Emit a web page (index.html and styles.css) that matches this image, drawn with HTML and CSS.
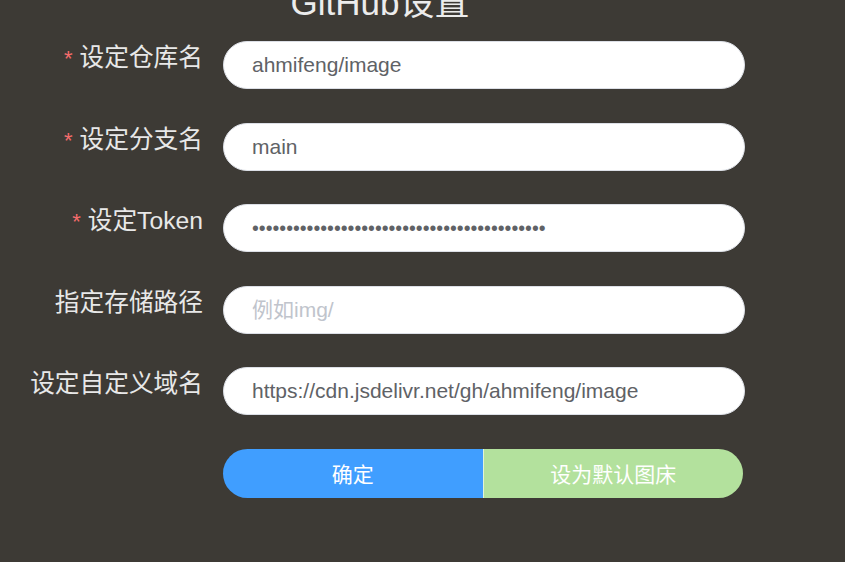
FILE: index.html
```html
<!DOCTYPE html>
<html lang="zh">
<head>
<meta charset="utf-8">
<link rel="stylesheet" href="styles.css">
</head>
<body>
<div class="panel">
  <h2 class="title">GitHub设置</h2>
  <form class="form">
    <div class="row">
      <label class="label"><span class="req">*</span>设定仓库名</label>
      <input class="input" type="text" value="ahmifeng/image">
    </div>
    <div class="row">
      <label class="label"><span class="req">*</span>设定分支名</label>
      <input class="input" type="text" value="main">
    </div>
    <div class="row">
      <label class="label"><span class="req">*</span>设定Token</label>
      <input class="input" type="password" value="ghp_abcdefghijklmnopqrstuvwxyz0123456789abc">
    </div>
    <div class="row">
      <label class="label">指定存储路径</label>
      <input class="input" type="text" placeholder="例如img/">
    </div>
    <div class="row">
      <label class="label">设定自定义域名</label>
      <input class="input" type="text" value="https://cdn.jsdelivr.net/gh/ahmifeng/image">
    </div>
    <div class="row">
      <div class="label"></div>
      <div class="btns">
        <button type="button" class="btn btn-primary">确定</button>
        <button type="button" class="btn btn-success">设为默认图床</button>
      </div>
    </div>
  </form>
</div>
</body>
</html>
```
FILE: styles.css
```css
html, body {
  margin: 0;
  padding: 0;
  background: #3d3a35;
  height: 100%;
  overflow: hidden;
}
body {
  font-family: "Liberation Sans", "Noto Sans CJK SC", sans-serif;
}
.panel {
  width: 760px;
}
.title {
  margin: -17px 0 0 0;
  height: 58px;
  text-align: center;
  font-size: 35px;
  font-weight: normal;
  line-height: 40px;
  color: #ececec;
}
.form {
  display: flex;
  flex-direction: column;
  gap: 33.5px;
}
.row {
  display: flex;
  align-items: flex-start;
  height: 48px;
}
.label {
  width: 203px;
  padding-right: 20px;
  flex: none;
  text-align: right;
  font-size: 24.7px;
  color: #e8e8e8;
  line-height: 33px;
  font-family: "Liberation Sans", "Noto Sans CJK SC", sans-serif;
}
.req {
  color: #f56c6c;
  margin-right: 7px;
  font-size: 22px;
}
.input {
  box-sizing: border-box;
  width: 522px;
  height: 48px;
  border: 1px solid #dcdfe6;
  border-radius: 24px;
  background: #fff;
  padding: 0 28px;
  font-family: "Liberation Sans", "Noto Sans CJK SC", sans-serif;
  font-size: 21px;
  color: #606266;
  outline: none;
}
.input[type="password"] {
  font-size: 19.5px;
}
.input::placeholder {
  color: #c0c4cc;
}
.btns {
  display: flex;
  width: 520px;
  height: 49px;
}
.btn {
  flex: 1;
  border: none;
  margin: 0;
  color: #fff;
  font-family: "Liberation Sans", "Noto Sans CJK SC", sans-serif;
  font-size: 21px;
  cursor: pointer;
}
.btn-primary {
  background: #409eff;
  border-radius: 25px 0 0 25px;
}
.btn-success {
  background: #b3e19d;
  border-left: 1px solid rgba(255,255,255,0.6);
  border-radius: 0 25px 25px 0;
}
```
